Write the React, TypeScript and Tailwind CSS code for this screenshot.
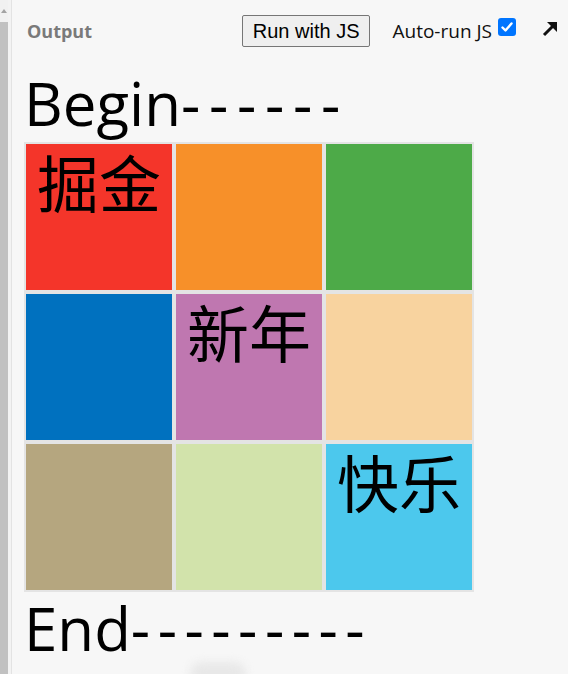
const cells = [
  { bg: "bg-[#f4352a]", text: "掘金" },
  { bg: "bg-[#f79029]", text: "" },
  { bg: "bg-[#4daa48]", text: "" },
  { bg: "bg-[#0071bf]", text: "" },
  { bg: "bg-[#bf77b0]", text: "新年" },
  { bg: "bg-[#f8d39f]", text: "" },
  { bg: "bg-[#b5a67f]", text: "" },
  { bg: "bg-[#d2e3ab]", text: "" },
  { bg: "bg-[#4cc8ed]", text: "快乐" },
];

function Scrollbar() {
  return (
    <div className="flex w-[8px] shrink-0 flex-col">
      <div className="flex h-[22px] items-start justify-start bg-[#f1f1f1] pl-[1px] pt-[9px]">
        <svg width="6" height="4" viewBox="0 0 6 4">
          <polygon points="0,4 3,0 6,4" fill="#a3a3a3" />
        </svg>
      </div>
      <div className="flex-1 bg-[#c1c1c1]" />
    </div>
  );
}

function PopOutIcon() {
  return (
    <svg width="16" height="16" viewBox="0 0 16 16">
      <line x1="2" y1="14" x2="11" y2="5" stroke="#111" strokeWidth="3" />
      <polygon points="5,1 15,1 15,11" fill="#111" />
    </svg>
  );
}

export default function App() {
  return (
    <div className="flex h-[674px] w-[568px] overflow-hidden bg-[#f7f7f7] font-['Open_Sans',sans-serif] text-black">
      <Scrollbar />
      <div className="w-[4px] shrink-0 border-r border-[#e3e3e3] bg-[#f3f3f3]" />

      <div className="flex flex-1 flex-col">
        {/* Top Bar */}
        <div className="mt-[15px] flex h-[32px] items-center pl-[15px]">
          <span className="text-[18px] font-bold text-[#7a7a7a]">Output</span>
          <button className="ml-auto h-[32px] rounded-[2px] border border-[#767676] bg-[#efefef] px-[10px] font-['Liberation_Sans',Arial,sans-serif] text-[20px] leading-none text-black">
            Run with JS
          </button>
          <span className="ml-[22px] text-[19px] text-[#111]">Auto-run JS</span>
          <div className="mb-[8px] ml-[6px] flex h-[18px] w-[18px] items-center justify-center rounded-[3px] bg-[#0075ff]">
            <svg width="14" height="14" viewBox="0 0 14 14">
              <path
                d="M2.5 7.5l3 3 6-7"
                fill="none"
                stroke="#fff"
                strokeWidth="2.4"
                strokeLinecap="round"
                strokeLinejoin="round"
              />
            </svg>
          </div>
          <div className="mb-[4px] ml-[26px] mr-[10px]">
            <PopOutIcon />
          </div>
        </div>

        <div className="mt-[26px] flex flex-col pl-[12px]">
          <div className="text-[60px] leading-[60px]">
            Begin<span className="tracking-[8.7px]">------</span>
          </div>

          <div className="mt-[9px] grid w-[450px] grid-cols-3">
            {cells.map((c, i) => (
              <div
                key={i}
                className={`h-[150px] w-[150px] border-2 border-[#e4e4e4] ${c.bg} pt-[6px] text-center font-['Noto_Sans_CJK_SC',sans-serif] text-[62px] leading-[62px]`}
              >
                {c.text}
              </div>
            ))}
          </div>

          <div className="mt-[6px] text-[60px] leading-[60px]">
            End<span className="tracking-[7.5px]">---------</span>
          </div>
          <div className="ml-[166px] mt-[4px] h-[24px] w-[56px] rounded-full bg-[#e8e8e8] blur-[4px]" />
        </div>
      </div>
    </div>
  );
}
